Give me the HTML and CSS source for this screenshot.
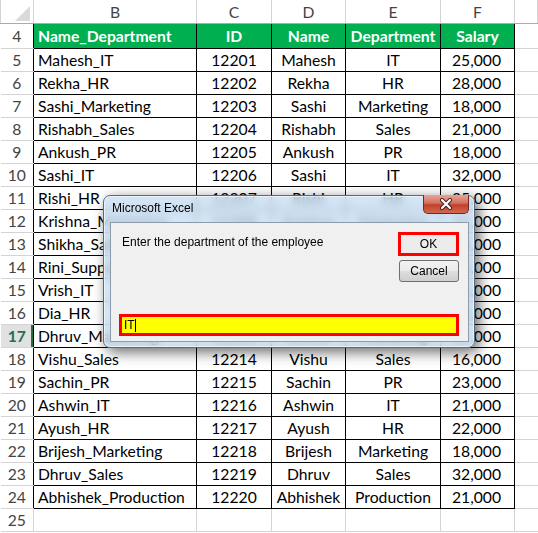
FILE: index.html
```html
<!DOCTYPE html>
<html lang="en">

<head>
    <meta charset="UTF-8">
    <title>Employee sheet</title>
    <link rel="stylesheet" href="styles.css">
</head>

<body>
    <table class="sheet">
        <colgroup>
            <col class="c-rh">
            <col class="c-b">
            <col class="c-c">
            <col class="c-d">
            <col class="c-e">
            <col class="c-f">
            <col>
        </colgroup>
        <tr class="letters">
            <th class="corner"><span class="tri"></span></th>
            <th>B</th>
            <th>C</th>
            <th>D</th>
            <th>E</th>
            <th>F</th>
            <th></th>
        </tr>
        <tr class="head data">
            <th class="rh">4</th>
            <td class="l">Name_Department</td>
            <td>ID</td>
            <td>Name</td>
            <td>Department</td>
            <td>Salary</td>
            <td class="g"></td>
        </tr>
        <tr class="data"><th class="rh">5</th><td class="l">Mahesh_IT</td><td>12201</td><td>Mahesh</td><td>IT</td><td class="r">25,000</td><td class="g"></td></tr>
        <tr class="data"><th class="rh">6</th><td class="l">Rekha_HR</td><td>12202</td><td>Rekha</td><td>HR</td><td class="r">28,000</td><td class="g"></td></tr>
        <tr class="data"><th class="rh">7</th><td class="l">Sashi_Marketing</td><td>12203</td><td>Sashi</td><td>Marketing</td><td class="r">18,000</td><td class="g"></td></tr>
        <tr class="data"><th class="rh">8</th><td class="l">Rishabh_Sales</td><td>12204</td><td>Rishabh</td><td>Sales</td><td class="r">21,000</td><td class="g"></td></tr>
        <tr class="data"><th class="rh">9</th><td class="l">Ankush_PR</td><td>12205</td><td>Ankush</td><td>PR</td><td class="r">18,000</td><td class="g"></td></tr>
        <tr class="data"><th class="rh">10</th><td class="l">Sashi_IT</td><td>12206</td><td>Sashi</td><td>IT</td><td class="r">32,000</td><td class="g"></td></tr>
        <tr class="data"><th class="rh">11</th><td class="l">Rishi_HR</td><td>12207</td><td>Rishi</td><td>HR</td><td class="r">25,000</td><td class="g"></td></tr>
        <tr class="data"><th class="rh">12</th><td class="l">Krishna_Marketing</td><td>12208</td><td>Krishna</td><td>Marketing</td><td class="r">21,000</td><td class="g"></td></tr>
        <tr class="data"><th class="rh">13</th><td class="l">Shikha_Sales</td><td>12209</td><td>Shikha</td><td>Sales</td><td class="r">28,000</td><td class="g"></td></tr>
        <tr class="data"><th class="rh">14</th><td class="l">Rini_Support</td><td>12210</td><td>Rini</td><td>Support</td><td class="r">18,000</td><td class="g"></td></tr>
        <tr class="data"><th class="rh">15</th><td class="l">Vrish_IT</td><td>12211</td><td>Vrish</td><td>IT</td><td class="r">32,000</td><td class="g"></td></tr>
        <tr class="data"><th class="rh">16</th><td class="l">Dia_HR</td><td>12212</td><td>Dia</td><td>HR</td><td class="r">23,000</td><td class="g"></td></tr>
        <tr class="data"><th class="rh active">17</th><td class="l">Dhruv_Marketing</td><td>12213</td><td>Dhruv</td><td>Marketing</td><td class="r">21,000</td><td class="g"></td></tr>
        <tr class="data"><th class="rh">18</th><td class="l">Vishu_Sales</td><td>12214</td><td>Vishu</td><td>Sales</td><td class="r">16,000</td><td class="g"></td></tr>
        <tr class="data"><th class="rh">19</th><td class="l">Sachin_PR</td><td>12215</td><td>Sachin</td><td>PR</td><td class="r">23,000</td><td class="g"></td></tr>
        <tr class="data"><th class="rh">20</th><td class="l">Ashwin_IT</td><td>12216</td><td>Ashwin</td><td>IT</td><td class="r">21,000</td><td class="g"></td></tr>
        <tr class="data"><th class="rh">21</th><td class="l">Ayush_HR</td><td>12217</td><td>Ayush</td><td>HR</td><td class="r">22,000</td><td class="g"></td></tr>
        <tr class="data"><th class="rh">22</th><td class="l">Brijesh_Marketing</td><td>12218</td><td>Brijesh</td><td>Marketing</td><td class="r">18,000</td><td class="g"></td></tr>
        <tr class="data"><th class="rh">23</th><td class="l">Dhruv_Sales</td><td>12219</td><td>Dhruv</td><td>Sales</td><td class="r">32,000</td><td class="g"></td></tr>
        <tr class="data"><th class="rh">24</th><td class="l">Abhishek_Production</td><td>12220</td><td>Abhishek</td><td>Production</td><td class="r">21,000</td><td class="g"></td></tr>
        <tr><th class="rh">25</th><td class="g"></td><td class="g"></td><td class="g"></td><td class="g"></td><td class="g"></td><td class="g"></td></tr>
    </table>

    <div class="dialog">
        <div class="titlebar">Microsoft Excel</div>
        <button class="close" aria-label="Close">
            <svg width="14" height="12" viewBox="0 0 14 12">
                <path d="M3 2 L11 10 M11 2 L3 10" stroke="#3a2020" stroke-width="4" stroke-linecap="round" />
                <path d="M3 2 L11 10 M11 2 L3 10" stroke="#fff" stroke-width="2.2" stroke-linecap="round" />
            </svg>
        </button>
        <div class="client">
            <div class="top">
                <p class="prompt">Enter the department of the employee</p>
                <div class="buttons">
                    <button class="btn ok">OK</button>
                    <button class="btn">Cancel</button>
                </div>
            </div>
            <div class="entry">IT<span class="caret"></span></div>
        </div>
    </div>
</body>

</html>
```

FILE: styles.css
```css
body {
    margin: 0;
    background: #fff;
    font-family: Lato, "Liberation Sans", sans-serif;
}

.sheet {
    width: 538px;
    table-layout: fixed;
    border-collapse: collapse;
    font-size: 15.7px;
    color: #000;
}

.c-rh { width: 33px; }
.c-b { width: 163px; }
.c-c { width: 75px; }
.c-d { width: 74px; }
.c-e { width: 95px; }
.c-f { width: 74px; }

.sheet th,
.sheet td {
    border: 1px solid #d4d4d4;
    padding: 0;
    height: 22px;
    line-height: 18px;
    text-align: center;
    white-space: nowrap;
    overflow: hidden;
    font-weight: normal;
}

.letters th {
    height: 23px;
    color: #444;
    border-top: none;
    border-bottom-color: #ababab;
}

.corner {
    position: relative;
    border-left: none;
}

.tri {
    position: absolute;
    right: 3px;
    bottom: 2px;
    width: 0;
    height: 0;
    border-left: 15px solid transparent;
    border-bottom: 15px solid #dadada;
}

.rh {
    color: #444;
    border-left: none !important;
}

.data .rh {
    border-right-color: #000;
}

.rh.active {
    background: #e1e1e1;
    color: #217346;
    font-weight: bold !important;
    box-shadow: inset -2px 0 #217346;
}

.data td {
    border-color: #000;
}

.data td.g {
    border-color: #d4d4d4;
    border-right: none;
}

td.g {
    border-right: none;
}

.head th,
.head td {
    height: 24px;
}

.head td {
    background: #00b050;
    color: #fff;
    font-weight: bold;
}

.head td.g {
    background: #fff;
}

.sheet .l {
    text-align: left;
    padding-left: 4px;
}

.sheet .r {
    text-align: right;
    padding-right: 13px;
}

/* input box dialog */
.dialog {
    position: absolute;
    left: 103px;
    top: 195px;
    width: 372px;
    height: 153px;
    box-sizing: border-box;
    display: flex;
    flex-direction: column;
    border: 1px solid #5a6a7c;
    border-radius: 7px;
    background: rgba(196, 220, 243, 0.72);
    backdrop-filter: blur(4px);
    box-shadow: 4px 4px 14px rgba(0, 0, 0, 0.6), inset 0 0 0 1px rgba(255, 255, 255, 0.6);
    font-family: "Liberation Sans", Arial, sans-serif;
}

.titlebar {
    height: 26px;
    line-height: 25px;
    padding-left: 8px;
    font-size: 12px;
    color: #000;
}

.close {
    position: absolute;
    top: -1px;
    right: 5px;
    width: 46px;
    height: 19px;
    padding: 0;
    display: flex;
    align-items: center;
    justify-content: center;
    border: 1px solid #6a2b22;
    border-top: none;
    border-radius: 0 0 5px 5px;
    background: linear-gradient(#e8a496 0%, #d4705e 45%, #c0402a 55%, #d2684f 100%);
}

.client {
    flex: 1;
    margin: 0 5px 5px 6px;
    border: 1px solid #8d9bab;
    background: #f0f0f0;
    display: flex;
    flex-direction: column;
    padding: 9px 9px 5px 8px;
}

.top {
    display: flex;
    justify-content: space-between;
}

.prompt {
    margin: 3px 0 0 3px;
    font-size: 12px;
    color: #000;
}

.buttons {
    display: flex;
    flex-direction: column;
    align-items: flex-end;
    gap: 4px;
}

.btn {
    width: 60px;
    height: 22px;
    padding: 0;
    font-family: "Liberation Sans", Arial, sans-serif;
    font-size: 12px;
    color: #000;
    border: 1px solid #707070;
    border-radius: 3px;
    background: linear-gradient(#f2f2f2 0%, #ebebeb 50%, #dddddd 51%, #cfcfcf 100%);
}

.btn.ok {
    width: 61px;
    height: 24px;
    border: 3px solid #f00;
    border-radius: 0;
    background: #ececec;
}

.entry {
    margin-top: auto;
    height: 22px;
    box-sizing: border-box;
    border: 3px solid #f00;
    background: #ff0;
    font-size: 12px;
    line-height: 16px;
    padding-left: 2px;
    display: flex;
    align-items: center;
}

.caret {
    display: inline-block;
    width: 1px;
    height: 13px;
    background: #000;
}
```
